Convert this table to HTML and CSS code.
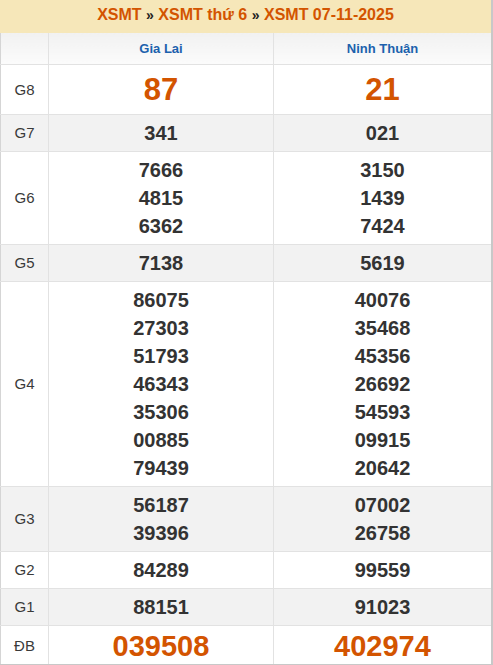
FILE: index.html
```html
<!DOCTYPE html>
<html lang="vi">
<head>
<meta charset="utf-8">
<link rel="stylesheet" href="styles.css">
</head>
<body>
<div class="box">
  <div class="title"><span>XSMT</span> <b class="sep">»</b> <span>XSMT thứ 6</span> <b class="sep">»</b> <span>XSMT 07-11-2025</span></div>
  <table class="kq">
    <colgroup><col class="c0"><col class="c1"><col class="c2"></colgroup>
    <thead>
      <tr class="head"><th></th><th>Gia Lai</th><th>Ninh Thuận</th></tr>
    </thead>
    <tbody>
      <tr class="g8"><td class="lb">G8</td><td class="big">87</td><td class="big">21</td></tr>
      <tr class="alt"><td class="lb">G7</td><td>341</td><td>021</td></tr>
      <tr><td class="lb">G6</td><td>7666<br>4815<br>6362</td><td>3150<br>1439<br>7424</td></tr>
      <tr class="alt"><td class="lb">G5</td><td>7138</td><td>5619</td></tr>
      <tr><td class="lb">G4</td><td>86075<br>27303<br>51793<br>46343<br>35306<br>00885<br>79439</td><td>40076<br>35468<br>45356<br>26692<br>54593<br>09915<br>20642</td></tr>
      <tr class="alt"><td class="lb">G3</td><td>56187<br>39396</td><td>07002<br>26758</td></tr>
      <tr><td class="lb">G2</td><td>84289</td><td>99559</td></tr>
      <tr class="alt"><td class="lb">G1</td><td>88151</td><td>91023</td></tr>
      <tr class="db"><td class="lb">ĐB</td><td class="big">039508</td><td class="big">402974</td></tr>
    </tbody>
  </table>
</div>
</body>
</html>
```
FILE: styles.css
```css
html, body { margin: 0; padding: 0; background: #fff; }
body { font-family: "Liberation Sans", Arial, sans-serif; }
.box { width: 493px; border-right: 2px solid #c8c8c8; border-bottom: 1px solid #c8c8c8; box-sizing: border-box; }
.title {
  background: #f6e7b9;
  height: 33px;
  line-height: 30px;
  text-align: center;
  color: #d35400;
  font-weight: bold;
  font-size: 16px;
}
.title .sep { color: #222; font-size: 14px; }
.kq { width: 100%; border-collapse: collapse; table-layout: fixed; }
.c0 { width: 48px; }
.c1 { width: 225px; }
.kq td, .kq th { border: 1px solid #e2e2e2; text-align: center; padding: 4px 0; }
.kq tr > :first-child { border-left: 1px solid #d5d5d5; }
.kq tr > :last-child { border-right: none; }
.head th {
  height: 23px;
  background: linear-gradient(#f1f1f1, #fbfbfb);
  color: #1c61ad;
  font-size: 13px;
  font-weight: bold;
  border-top: none;
}
.kq td { font-size: 20px; font-weight: bold; color: #333; line-height: 28px; }
.kq td.lb { font-size: 15px; font-weight: normal; color: #3a3a3a; }
.alt td { background: #f2f2f2; }
.g8 td { height: 41px; padding: 4px 0; }
.g8 td.big { font-size: 31px; color: #d35400; }
.db td { height: 31px; padding: 4px 0 3px; }
.db td.big { font-size: 29px; color: #d35400; }
.kq tbody tr:last-child td { border-bottom: none; }
```
